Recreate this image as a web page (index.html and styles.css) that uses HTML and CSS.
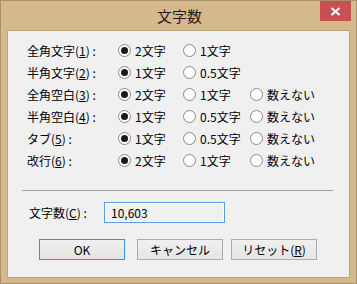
FILE: index.html
```html
<!DOCTYPE html>
<html lang="ja">
<head>
    <meta charset="UTF-8">
    <title>文字数</title>
    <link rel="stylesheet" href="styles.css">
</head>
<body>
    <div class="window">
        <div class="titlebar">
            <div class="title">文字数</div>
            <div class="close">
                <svg width="11" height="9" viewBox="0 0 11 9">
                    <path d="M1.5 1 L9.5 8 M9.5 1 L1.5 8" stroke="#fff" stroke-width="2.2" fill="none"/>
                </svg>
            </div>
        </div>

        <div class="client">
            <!-- 設定の行 -->
            <div class="options">
                <div class="label">全角文字(<u>1</u>) :</div>
                <div class="radio"><span class="dot on"></span>2文字</div>
                <div class="radio"><span class="dot"></span>1文字</div>
                <div></div>

                <div class="label">半角文字(<u>2</u>) :</div>
                <div class="radio"><span class="dot on"></span>1文字</div>
                <div class="radio"><span class="dot"></span>0.5文字</div>
                <div></div>

                <div class="label">全角空白(<u>3</u>) :</div>
                <div class="radio"><span class="dot on"></span>2文字</div>
                <div class="radio"><span class="dot"></span>1文字</div>
                <div class="radio"><span class="dot"></span>数えない</div>

                <div class="label">半角空白(<u>4</u>) :</div>
                <div class="radio"><span class="dot on"></span>1文字</div>
                <div class="radio"><span class="dot"></span>0.5文字</div>
                <div class="radio"><span class="dot"></span>数えない</div>

                <div class="label">タブ(<u>5</u>) :</div>
                <div class="radio"><span class="dot on"></span>1文字</div>
                <div class="radio"><span class="dot"></span>0.5文字</div>
                <div class="radio"><span class="dot"></span>数えない</div>

                <div class="label">改行(<u>6</u>) :</div>
                <div class="radio"><span class="dot on"></span>2文字</div>
                <div class="radio"><span class="dot"></span>1文字</div>
                <div class="radio"><span class="dot"></span>数えない</div>
            </div>

            <div class="separator"></div>

            <div class="count">
                <div class="count-label">文字数(<u>C</u>) :</div>
                <div class="count-box">10,603</div>
            </div>

            <div class="buttons">
                <div class="btn default">OK</div>
                <div class="btn cancel">キャンセル</div>
                <div class="btn">リセット(<u>R</u>)</div>
            </div>
        </div>
    </div>
</body>
</html>
```

FILE: styles.css
```css
/* 全体 */
body {
    margin: 0;
    font-family: "Noto Sans CJK JP", "Liberation Sans", sans-serif;
    font-size: 12px;
    color: #000;
}
u {
    text-decoration: underline;
    text-underline-offset: 1px;
}

/* ウィンドウ枠 */
.window {
    width: 355px;
    height: 282px;
    border: 1px solid #a8916c;
    background-color: #d4b98c;
    display: flex;
    flex-direction: column;
}
.titlebar {
    position: relative;
    height: 29px;
    display: flex;
    justify-content: center;
    align-items: center;
}
.title {
    font-size: 15px;
    color: #1e1e1e;
    padding-left: 2px;
}
.close {
    position: absolute;
    top: 0;
    right: 5px;
    width: 31px;
    height: 20px;
    background-color: #c75050;
    display: flex;
    justify-content: center;
    align-items: center;
}

/* クライアント領域 */
.client {
    margin: 0 6px;
    height: 246px;
    border: 1px solid #bca67f;
    background-color: #f0f0f0;
}
.options {
    display: grid;
    grid-template-columns: 91px 65px 67px auto;
    grid-auto-rows: 22px;
    padding: 8px 0 0 19px;
}
.label, .radio {
    display: flex;
    align-items: center;
    white-space: nowrap;
}
.dot {
    width: 11px;
    height: 11px;
    border: 1px solid #8a8a8a;
    border-radius: 50%;
    background-color: #fff;
    margin-right: 4px;
    display: flex;
    justify-content: center;
    align-items: center;
}
.dot.on::after {
    content: "";
    width: 7px;
    height: 7px;
    border-radius: 50%;
    background-color: #1a1a1a;
}

.separator {
    height: 1px;
    background-color: #a0a0a0;
    margin: 19px 16px 0 14px;
}

/* 文字数 */
.count {
    display: flex;
    align-items: center;
    padding: 11px 0 0 21px;
}
.count-label {
    width: 75px;
}
.count-box {
    width: 113px;
    height: 19px;
    border: 1px solid #569de5;
    background-color: #f0f0f0;
    box-shadow: inset 0 0 0 1px #fff;
    display: flex;
    align-items: center;
    padding-left: 6px;
}

/* ボタン */
.buttons {
    display: flex;
    padding: 16px 0 0 31px;
    gap: 8px;
}
.btn {
    width: 84px;
    height: 19px;
    border: 1px solid #acacac;
    background: linear-gradient(#f0f0f0, #e5e5e5);
    display: flex;
    justify-content: center;
    align-items: center;
}
.btn.default {
    border-color: #3c8fe8;
    margin-right: 4px;
}
```
